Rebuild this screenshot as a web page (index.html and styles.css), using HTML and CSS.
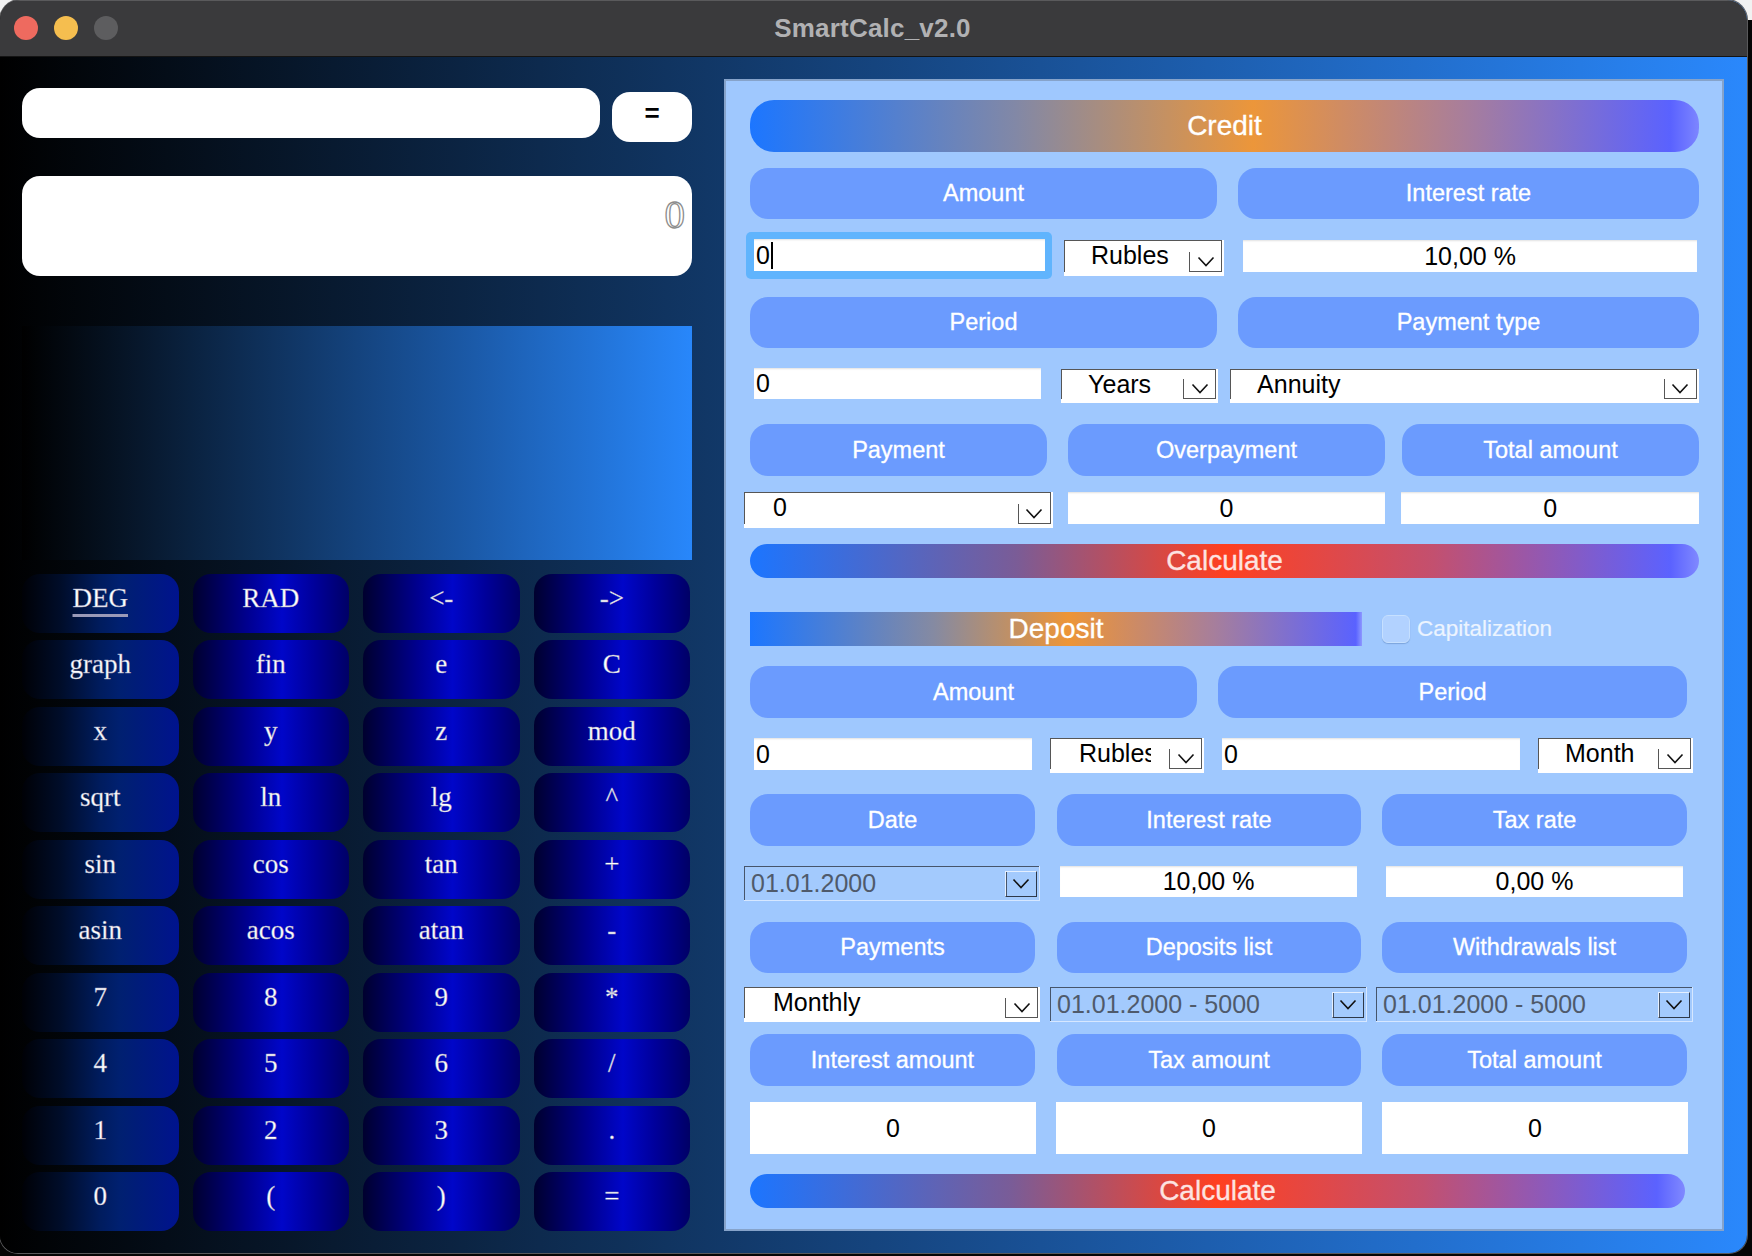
FILE: index.html
```html
<!DOCTYPE html>
<html lang="en">
<head>
<meta charset="utf-8">
<title>SmartCalc_v2.0</title>
<link rel="stylesheet" href="styles.css">
</head>
<body>
<div class="window">
  <div class="titlebar">
    <div class="lights">
      <span class="light red"></span>
      <span class="light yellow"></span>
      <span class="light gray"></span>
    </div>
    <div class="title">SmartCalc_v2.0</div>
  </div>
  <div class="content">
    <div class="calc">
      <div class="expr-row">
        <div class="expr-input"></div>
        <div class="eq-btn">=</div>
      </div>
      <div class="result"><span>0</span></div>
      <div class="graph"></div>
      <div class="keys">
        <div class="key k1"><u>DEG</u></div><div class="key">RAD</div><div class="key">&lt;-</div><div class="key">-&gt;</div>
        <div class="key k1">graph</div><div class="key">fin</div><div class="key">e</div><div class="key">C</div>
        <div class="key k1">x</div><div class="key">y</div><div class="key">z</div><div class="key">mod</div>
        <div class="key k1">sqrt</div><div class="key">ln</div><div class="key">lg</div><div class="key">^</div>
        <div class="key k1">sin</div><div class="key">cos</div><div class="key">tan</div><div class="key">+</div>
        <div class="key k1">asin</div><div class="key">acos</div><div class="key">atan</div><div class="key">-</div>
        <div class="key k1">7</div><div class="key">8</div><div class="key">9</div><div class="key">*</div>
        <div class="key k1">4</div><div class="key">5</div><div class="key">6</div><div class="key">/</div>
        <div class="key k1">1</div><div class="key">2</div><div class="key">3</div><div class="key">.</div>
        <div class="key k1">0</div><div class="key">(</div><div class="key">)</div><div class="key">=</div>
      </div>
    </div>

    <div class="panel">
      <div class="bar credit-bar">Credit</div>

      <div class="row r2">
        <div class="lbl w467">Amount</div>
        <div class="lbl w461 ml21">Interest rate</div>
      </div>
      <div class="row r3">
        <div class="focus"><div class="field left f291">0<span class="caret"></span></div></div>
        <div class="combo c160 ml12 mt8"><div class="combo-box"><span class="combo-text">Rubles</span><span class="combo-arrow"><svg width="18" height="11" viewBox="0 0 18 11"><polyline points="1.5,1.5 9,9.5 16.5,1.5" fill="none" stroke="#111" stroke-width="1.6"/></svg></span></div></div>
        <div class="field center f454 ml19 mt8">10,00 %</div>
      </div>

      <div class="row r4">
        <div class="lbl w467">Period</div>
        <div class="lbl w461 ml21">Payment type</div>
      </div>
      <div class="row r5">
        <div class="field left f289 h31 ml4">0</div>
        <div class="combo c158 h34 ml20 mt1"><div class="combo-box"><span class="combo-text">Years</span><span class="combo-arrow"><svg width="18" height="11" viewBox="0 0 18 11"><polyline points="1.5,1.5 9,9.5 16.5,1.5" fill="none" stroke="#111" stroke-width="1.6"/></svg></span></div></div>
        <div class="combo c472 h34 ml12 mt1"><div class="combo-box"><span class="combo-text">Annuity</span><span class="combo-arrow"><svg width="18" height="11" viewBox="0 0 18 11"><polyline points="1.5,1.5 9,9.5 16.5,1.5" fill="none" stroke="#111" stroke-width="1.6"/></svg></span></div></div>
      </div>

      <div class="row r6">
        <div class="lbl w297">Payment</div>
        <div class="lbl w317 ml21">Overpayment</div>
        <div class="lbl w297 ml17">Total amount</div>
      </div>
      <div class="row r7">
        <div class="combo c309 h36 mln6"><div class="combo-box"><span class="combo-text pad29">0</span><span class="combo-arrow"><svg width="18" height="11" viewBox="0 0 18 11"><polyline points="1.5,1.5 9,9.5 16.5,1.5" fill="none" stroke="#111" stroke-width="1.6"/></svg></span></div></div>
        <div class="field center f318 ml15">0</div>
        <div class="field center f298 ml16">0</div>
      </div>

      <div class="row r8">
        <div class="bar calc-bar w949">Calculate</div>
      </div>

      <div class="row r9">
        <div class="bar deposit-bar">Deposit</div>
        <div class="check"></div>
        <div class="check-label">Capitalization</div>
      </div>

      <div class="row r10">
        <div class="lbl w447">Amount</div>
        <div class="lbl w469 ml21">Period</div>
      </div>
      <div class="row r11">
        <div class="field left f278 ml4">0</div>
        <div class="combo c154 h35 ml18"><div class="combo-box"><span class="combo-text pad29 clip">Rubles</span><span class="combo-arrow"><svg width="18" height="11" viewBox="0 0 18 11"><polyline points="1.5,1.5 9,9.5 16.5,1.5" fill="none" stroke="#111" stroke-width="1.6"/></svg></span></div></div>
        <div class="field left f298 ml18">0</div>
        <div class="combo c155 h35 ml18"><div class="combo-box"><span class="combo-text">Month</span><span class="combo-arrow"><svg width="18" height="11" viewBox="0 0 18 11"><polyline points="1.5,1.5 9,9.5 16.5,1.5" fill="none" stroke="#111" stroke-width="1.6"/></svg></span></div></div>
      </div>

      <div class="row r12">
        <div class="lbl w285">Date</div>
        <div class="lbl w304 ml22">Interest rate</div>
        <div class="lbl w305 ml21">Tax rate</div>
      </div>
      <div class="row r13">
        <div class="combo dis c296 h35 mln6"><div class="combo-box"><span class="combo-text pad7">01.01.2000</span><span class="combo-arrow"><svg width="18" height="11" viewBox="0 0 18 11"><polyline points="1.5,1.5 9,9.5 16.5,1.5" fill="none" stroke="#111" stroke-width="1.6"/></svg></span></div></div>
        <div class="field center f297 h31 ml20">10,00 %</div>
        <div class="field center f297 h31 ml29">0,00 %</div>
      </div>

      <div class="row r14">
        <div class="lbl w285">Payments</div>
        <div class="lbl w304 ml22">Deposits list</div>
        <div class="lbl w305 ml21">Withdrawals list</div>
      </div>
      <div class="row r15">
        <div class="combo c296 h35 mln6"><div class="combo-box"><span class="combo-text pad29">Monthly</span><span class="combo-arrow"><svg width="18" height="11" viewBox="0 0 18 11"><polyline points="1.5,1.5 9,9.5 16.5,1.5" fill="none" stroke="#111" stroke-width="1.6"/></svg></span></div></div>
        <div class="combo dis c317 h35 ml10"><div class="combo-box"><span class="combo-text pad7">01.01.2000 - 5000</span><span class="combo-arrow"><svg width="18" height="11" viewBox="0 0 18 11"><polyline points="1.5,1.5 9,9.5 16.5,1.5" fill="none" stroke="#111" stroke-width="1.6"/></svg></span></div></div>
        <div class="combo dis c317 h35 ml9"><div class="combo-box"><span class="combo-text pad7">01.01.2000 - 5000</span><span class="combo-arrow"><svg width="18" height="11" viewBox="0 0 18 11"><polyline points="1.5,1.5 9,9.5 16.5,1.5" fill="none" stroke="#111" stroke-width="1.6"/></svg></span></div></div>
      </div>

      <div class="row r16">
        <div class="lbl w285">Interest amount</div>
        <div class="lbl w304 ml22">Tax amount</div>
        <div class="lbl w305 ml21">Total amount</div>
      </div>
      <div class="row r17">
        <div class="out w286">0</div>
        <div class="out w306 ml20">0</div>
        <div class="out w306 ml20">0</div>
      </div>

      <div class="row r18">
        <div class="bar calc-bar w935">Calculate</div>
      </div>
    </div>
  </div>
</div>
</body>
</html>
```
FILE: styles.css
```css
html, body {
  margin: 0;
  padding: 0;
}
body {
  width: 1752px;
  height: 1256px;
  background: linear-gradient(#f2f2f2 0 20px, #050505 20px);
  font-family: "Liberation Sans", Arial, sans-serif;
  overflow: hidden;
}
.window {
  width: 1747px;
  height: 1253px;
  border-radius: 20px 20px 18px 18px;
  overflow: hidden;
  display: flex;
  flex-direction: column;
  box-shadow: 0 0 0 1px #59595b;
  background: linear-gradient(90deg, #000 0%, #2a88fc 100%);
}
.titlebar {
  height: 56px;
  flex: none;
  background: #3a3a3c;
  border-bottom: 1px solid #141414;
  display: flex;
  align-items: center;
  justify-content: center;
  position: relative;
  box-shadow: inset 0 1px 0 #5a5a5c;
}
.lights {
  position: absolute;
  left: 14px;
  top: 16px;
  display: flex;
  gap: 16px;
}
.light {
  width: 24px;
  height: 24px;
  border-radius: 50%;
  display: block;
}
.red { background: #ee6a5f; }
.yellow { background: #f5be4f; }
.gray { background: #5d5d5f; }
.title {
  color: #b1b1b3;
  font-weight: bold;
  font-size: 26px;
  letter-spacing: 0.2px;
  margin-left: -2px;
}
.content {
  flex: 1;
  display: flex;
  align-items: flex-start;
  padding-left: 22px;
}

/* left calculator */
.calc {
  width: 670px;
  margin-top: 31px;
  display: flex;
  flex-direction: column;
}
.expr-row {
  display: flex;
  align-items: flex-start;
  gap: 12px;
}
.expr-input {
  width: 578px;
  height: 50px;
  background: #fff;
  border-radius: 18px;
}
.eq-btn {
  width: 80px;
  height: 50px;
  margin-top: 4px;
  background: #fff;
  border-radius: 18px;
  display: flex;
  align-items: center;
  justify-content: center;
  font-size: 26px;
  font-weight: bold;
  color: #000;
  padding-bottom: 8px;
  box-sizing: border-box;
}
.result {
  margin-top: 34px;
  width: 670px;
  height: 100px;
  background: #fff;
  border-radius: 18px;
  box-sizing: border-box;
  padding: 16px 7px 0 0;
  text-align: right;
  font-family: "Liberation Serif", serif;
  font-size: 41px;
  line-height: 44px;
  color: #fff;
  -webkit-text-stroke: 1.3px #8c8c8c;
}
.graph {
  margin-top: 50px;
  width: 670px;
  height: 234px;
  background: linear-gradient(90deg, #000 0%, #0e2f58 35%, #1a57a3 65%, #2887fb 100%);
}
.keys {
  margin-top: 14px;
  width: 668px;
  display: grid;
  grid-template-columns: repeat(4, 1fr);
  grid-auto-rows: 59px;
  column-gap: 14px;
  row-gap: 7.44px;
}
.key {
  border-radius: 18px;
  background: linear-gradient(90deg, #00002e 0%, #000090 35%, #0006c9 57%, #00009a 78%, #000066 100%);
  display: flex;
  align-items: center;
  justify-content: center;
  padding-bottom: 10px;
  box-sizing: border-box;
  font-family: "Liberation Serif", serif;
  font-size: 27px;
  color: #fff;
  -webkit-text-stroke: 0.4px #9a9ab8;
}
.key.k1 {
  background: linear-gradient(90deg, #000106 0%, #000d2a 25%, #001c5e 50%, #002070 62%, #00138e 100%);
}
.key u {
  text-decoration-thickness: 3px;
  text-underline-offset: 7px;
}

/* right panel */
.panel {
  margin-top: 22px;
  margin-left: 32px;
  width: 1000px;
  height: 1152px;
  box-sizing: border-box;
  border: 2px solid #86a3ca;
  background: #9fc8fe;
  padding: 19px 23px 0 24px;
  color: #fff;
}
.row {
  display: flex;
  align-items: flex-start;
}
.r2 { margin-top: 16px; }
.r3 { margin-top: 13px; }
.r4 { margin-top: 18px; }
.r5 { margin-top: 20px; }
.r6 { margin-top: 21px; }
.r7 { margin-top: 16px; }
.r8 { margin-top: 16px; }
.r9 { margin-top: 34px; align-items: center; }
.r10 { margin-top: 20px; }
.r11 { margin-top: 20px; }
.r12 { margin-top: 21px; }
.r13 { margin-top: 20px; }
.r14 { margin-top: 21px; }
.r15 { margin-top: 14px; }
.r16 { margin-top: 12px; }
.r17 { margin-top: 16px; }
.r18 { margin-top: 20px; }

.bar {
  height: 34px;
  display: flex;
  align-items: center;
  justify-content: center;
  font-size: 28px;
  color: #fff;
  -webkit-text-stroke: 0.3px currentColor;
}
.credit-bar {
  height: 52px;
  border-radius: 24px;
  background: linear-gradient(90deg, #1c76ff 0%, #8288a6 28%, #ec963a 53%, #a97e9a 75%, #5a62ff 97%, #7d86ff 100%);
}
.calc-bar {
  border-radius: 17px;
  color: #fde3e1;
  background: linear-gradient(90deg, #1c75ff 0%, #7a5c97 28%, #ff4020 50%, #c3506f 72%, #5b62ff 97%, #8089ff 100%);
}
.deposit-bar {
  width: 612px;
  background: linear-gradient(90deg, #1c76ff 0%, #858aa2 30%, #ed9537 52%, #a67e9c 76%, #5a62ff 99%, #8d98ff 100%);
}
.check {
  width: 28px;
  height: 28px;
  margin-left: 20px;
  box-sizing: border-box;
  border-radius: 6px;
  background: #b2d2ff;
  border: 1px solid #c6e0ff;
  box-shadow: 0 1px 1px rgba(60, 100, 160, 0.35);
}
.check-label {
  margin-left: 7px;
  font-size: 22.5px;
  color: #ecf4ff;
  -webkit-text-stroke: 0.2px currentColor;
}

.lbl {
  height: 51px;
  background: #6b9bfe;
  border-radius: 18px;
  display: flex;
  align-items: center;
  justify-content: center;
  font-size: 23.5px;
  color: #fff;
  -webkit-text-stroke: 0.3px #fff;
}
.r6 .lbl, .r10 .lbl, .r12 .lbl, .r16 .lbl { height: 52px; }

.field {
  height: 32px;
  background: #fff;
  color: #000;
  font-size: 25px;
  line-height: 32px;
  box-sizing: border-box;
  box-shadow: inset 0 2px 2px -1px rgba(0, 0, 0, 0.12);
  white-space: nowrap;
}
.field.left { padding-left: 2px; }
.field.center { text-align: center; }
.focus {
  margin-left: -4px;
  padding: 7px 7px 8px 8px;
  background: #60b4fd;
  border-radius: 5px;
}
.caret {
  display: inline-block;
  width: 2px;
  height: 27px;
  background: #000;
  vertical-align: -5px;
  margin-left: 1px;
}
.out {
  height: 52px;
  background: #fff;
  color: #000;
  font-size: 25px;
  display: flex;
  align-items: center;
  justify-content: center;
}

.combo {
  height: 36px;
  background: #fff;
  padding: 0 2px 4px 0;
  box-sizing: border-box;
  color: #000;
}
.combo-box {
  height: 100%;
  box-sizing: border-box;
  border: 1px solid #565656;
  border-bottom: none;
  display: flex;
  align-items: flex-start;
}
.combo-text {
  flex: 1;
  min-width: 0;
  padding-left: 26px;
  font-size: 25px;
  line-height: 29px;
  white-space: nowrap;
  overflow: hidden;
}
.combo-text.pad29 { padding-left: 28px; }
.combo-text.pad7 { padding-left: 6px; }
.combo-text.clip { flex: none; width: 72px; padding-left: 28px; }
.combo-text.clip + .combo-arrow { margin-left: auto; }
.combo-arrow {
  align-self: flex-end;
  flex: none;
  width: 32px;
  height: 20px;
  box-sizing: border-box;
  border-left: 1px solid #565656;
  border-bottom: 1px solid #565656;
  display: flex;
  align-items: center;
  justify-content: center;
}
.combo.dis {
  background: #a3cafd;
  padding: 0 1px 1px 0;
  box-shadow: inset -1px -1px 0 #d6e7ff;
}
.combo.dis .combo-box {
  border: 1px solid #46556b;
  border-right: none;
  border-bottom: none;
  align-items: center;
}
.combo.dis .combo-text {
  color: #4f5a6b;
}
.combo.dis .combo-arrow {
  align-self: center;
  height: 26px;
  width: 32px;
  margin-right: 2px;
  border: 1px solid #2e3848;
  border-left-color: #e4efff;
  border-top-color: #e4efff;
  box-shadow: inset 1px 0 0 #46556b;
}

/* sizes */
.w467 { width: 467px; }
.w461 { width: 461px; }
.w297 { width: 297px; }
.w317 { width: 317px; }
.w447 { width: 447px; }
.w469 { width: 469px; }
.w285 { width: 285px; }
.w304 { width: 304px; }
.w305 { width: 305px; }
.w286 { width: 286px; }
.w306 { width: 306px; }
.w949 { width: 949px; }
.w935 { width: 935px; }
.f291 { width: 291px; }
.f454 { width: 454px; }
.f289 { width: 289px; }
.f318 { width: 318px; }
.f298 { width: 298px; }
.f278 { width: 278px; }
.f297 { width: 297px; }
.c160 { width: 160px; }
.c158 { width: 158px; }
.c472 { width: 472px; }
.c309 { width: 309px; }
.c154 { width: 154px; }
.c155 { width: 155px; }
.c296 { width: 296px; }
.c317 { width: 317px; }
.h31 { height: 31px; line-height: 31px; }
.h34 { height: 34px; }
.h35 { height: 35px; }
.h36 { height: 36px; }
.ml4 { margin-left: 4px; }
.ml9 { margin-left: 9px; }
.ml10 { margin-left: 10px; }
.ml12 { margin-left: 12px; }
.ml15 { margin-left: 15px; }
.ml16 { margin-left: 16px; }
.ml17 { margin-left: 17px; }
.ml18 { margin-left: 18px; }
.ml19 { margin-left: 19px; }
.ml20 { margin-left: 20px; }
.ml21 { margin-left: 21px; }
.ml22 { margin-left: 22px; }
.ml29 { margin-left: 29px; }
.mln6 { margin-left: -6px; }
.mt1 { margin-top: 1px; }
.mt8 { margin-top: 8px; }
```
